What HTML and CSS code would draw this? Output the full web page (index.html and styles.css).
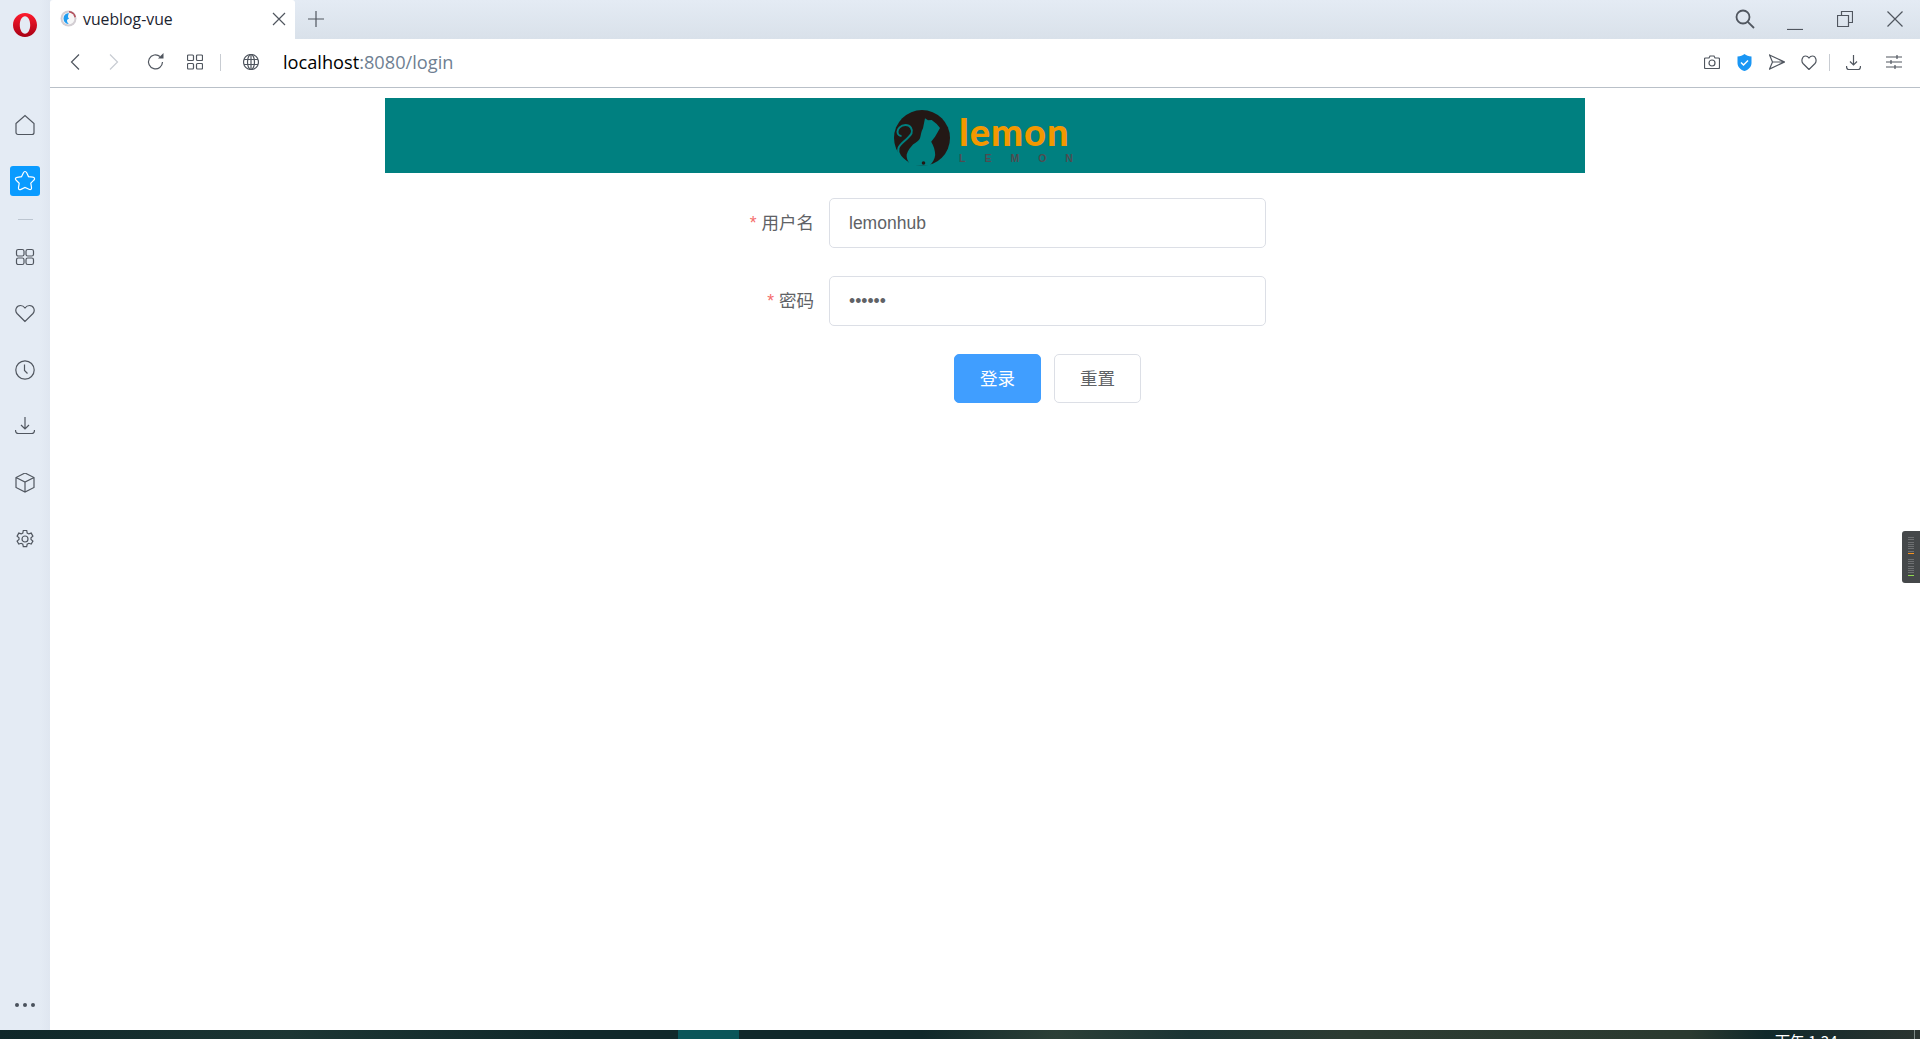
FILE: index.html
```html
<!DOCTYPE html>
<html lang="zh-CN">
<head>
    <meta charset="UTF-8">
    <meta name="viewport" content="width=device-width, initial-scale=1.0">
    <title>vueblog-vue</title>
    <link rel="stylesheet" href="styles.css">
</head>
<body>
    <div class="ventana">
        <aside class="lateral">
            <svg class="opera" width="28" height="28" viewBox="0 0 28 28">
                <defs>
                    <linearGradient id="rojo" x1="0" y1="0" x2="0" y2="1">
                        <stop offset="0" stop-color="#ff1b2d"/>
                        <stop offset="1" stop-color="#a70014"/>
                    </linearGradient>
                </defs>
                <path fill="url(#rojo)" fill-rule="evenodd" d="M14 2C7.400 2 2 7.400 2 14s5.400 12 12 12 12-5.400 12-12S20.600 2 14 2zM14 5.300c3 0 5.200 3.900 5.200 8.700s-2.200 8.700-5.200 8.700-5.200-3.900-5.200-8.700 2.200-8.700 5.200-8.700z"/>
            </svg>
            <a class="lat-btn">
                <svg width="24" height="24" viewBox="0 0 24 24" class="ico"><path d="M3 10.500 12 2.500l9 8v9a2 2 0 0 1-2 2H5a2 2 0 0 1-2-2z"/></svg>
            </a>
            <a class="lat-btn lat-activo">
                <svg width="24" height="24" viewBox="0 0 24 24" class="ico-blanco"><path d="M12 2.500c.8 0 1.300.5 1.700 1.300l1.800 3.800 4.300.6c2 .3 2.300 1.800 1 3l-3 3 .7 4.300c.3 1.800-1 2.600-2.500 1.800L12 18.400l-4 2c-1.500.8-2.800 0-2.500-1.800l.7-4.300-3-3c-1.300-1.200-1-2.700 1-3l4.300-.6 1.800-3.800c.4-.8.900-1.400 1.700-1.400z"/></svg>
            </a>
            <div class="lat-sep"></div>
            <a class="lat-btn">
                <svg width="20" height="20" viewBox="0 0 20 20" class="ico"><rect x="1.500" y="2.500" width="7.500" height="6.500" rx="1.800"/><rect x="11" y="2.500" width="7.500" height="6.500" rx="1.800"/><rect x="1.500" y="11" width="7.500" height="6.500" rx="1.800"/><rect x="11" y="11" width="7.500" height="6.500" rx="1.800"/></svg>
            </a>
            <a class="lat-btn">
                <svg width="20" height="20" viewBox="0 1 20 20" class="ico"><path d="M10 18.500 2 10.500C-.5 7.500 1.200 2.500 5.500 2.500c2 0 3.400 1 4.500 2.500 1.100-1.500 2.500-2.500 4.500-2.500 4.300 0 6 5 3.500 8z"/></svg>
            </a>
            <a class="lat-btn">
                <svg width="20" height="20" viewBox="0 0 20 20" class="ico"><circle cx="10" cy="10" r="9.200"/><path d="M9.500 4.500v6l3 3"/></svg>
            </a>
            <a class="lat-btn">
                <svg width="20" height="20" viewBox="0 1.500 20 20" class="ico"><path d="M10 1.500v12M6 9.500l4 4 4-4M.5 14.500c0 2 1 3.500 3 3.500h13c2 0 3-1.500 3-3.500"/></svg>
            </a>
            <a class="lat-btn">
                <svg width="20" height="20" viewBox="0 .5 20 20" class="ico"><path d="M10 .5l9 4.500v10l-9 4.500-9-4.500V5zM1 5l9 4.500L19 5M10 9.500v10"/></svg>
            </a>
            <a class="lat-btn">
                <svg width="20" height="20" viewBox="0 0 20 20" class="ico"><circle cx="10" cy="10" r="3"/><path d="M8.300 1.500h3.400l.5 2.500 1.600.9 2.400-.8 1.700 3-1.900 1.600v1.800l1.900 1.600-1.700 3-2.400-.8-1.600.9-.5 2.500H8.300l-.5-2.500-1.600-.9-2.400.8-1.700-3 1.900-1.600V8.700L2.100 7.100l1.700-3 2.400.8 1.600-.9z"/></svg>
            </a>
            <div class="lat-mas"><span></span><span></span><span></span></div>
        </aside>

        <div class="principal">
            <div class="pestanas">
                <div class="pestana">
                    <svg class="favicon" width="17" height="17" viewBox="0 0 17 17">
                        <circle cx="8.500" cy="8.500" r="8" fill="#d3ced3"/>
                        <path d="M9 1a8 8 0 0 1 7 6l-2 .5A6 6 0 0 0 9 3z" fill="#b4505c"/>
                        <circle cx="8.500" cy="8.500" r="6" fill="#f6f6f6"/>
                        <path d="M9 3a5.500 5.500 0 1 0 0 11c-1.500-1-2-2.300-2-3.500 0-1 1-1.500 2-1.500L8 7c0-1.500.5-3 1-4z" fill="#1f9cf0"/>
                    </svg>
                    <span class="pestana-titulo">vueblog-vue</span>
                    <svg class="cerrar" width="14" height="14" viewBox="0 0 14 14"><path d="M1 1l12 12M13 1 1 13"/></svg>
                </div>
                <svg class="nueva" width="16" height="16" viewBox="0 0 16 16"><path d="M8 0v16M0 8h16"/></svg>
                <div class="controles">
                    <svg class="ctl-buscar" width="20" height="20" viewBox="0 0 20 20"><circle cx="8" cy="8" r="6.500"/><path d="M12.800 12.800 19 19"/></svg>
                    <svg class="ctl-min" width="16" height="16" viewBox="0 0 16 16"><path d="M0 15.500h16"/></svg>
                    <svg class="ctl-max" width="16" height="16" viewBox="0 0 16 16"><path d="M.5 4.500h11v11H.5zM4.500 4.500V.5h11v11h-4"/></svg>
                    <svg class="ctl-x" width="16" height="16" viewBox="0 0 16 16"><path d="M.5.500l15 15M15.500.500l-15 15"/></svg>
                </div>
            </div>

            <div class="barra">
                <svg class="nav" width="10" height="16" viewBox="0 0 10 16"><path d="M9 .5 1.500 8 9 15.500"/></svg>
                <svg class="nav nav-off" width="10" height="16" viewBox="0 0 10 16"><path d="M1 .5 8.500 8 1 15.500"/></svg>
                <svg class="recargar" width="18" height="18" viewBox="0 0 18 18"><path d="M15.500 9A7 7 0 1 1 13 3.500"/><path class="relleno" d="M11 5.500h5.500V0z"/></svg>
                <svg class="rejilla" width="16" height="16" viewBox="0 0 16 16"><rect x=".5" y="1" width="6" height="5.500" rx="1"/><rect x="9.500" y="1" width="6" height="5.500" rx="1"/><rect x=".5" y="9.500" width="6" height="5.500" rx="1"/><rect x="9.500" y="9.500" width="6" height="5.500" rx="1"/></svg>
                <div class="sep"></div>
                <svg class="globo" width="16" height="16" viewBox="0 0 16 16"><circle cx="8" cy="8" r="7.500"/><ellipse cx="8" cy="8" rx="3.500" ry="7.500"/><path d="M8 .5v15M1 5.500h14M1 10.500h14"/></svg>
                <div class="url">localhost<span class="url-gris">:8080/login</span></div>
                <div class="barra-der">
                    <svg class="d-camara" width="16" height="14" viewBox="0 0 16 14"><path d="M1.500 3H5l1-2h4l1 2h3.500a1 1 0 0 1 1 1v8.500a1 1 0 0 1-1 1h-13a1 1 0 0 1-1-1V4a1 1 0 0 1 1-1z"/><circle cx="8" cy="8" r="3"/></svg>
                    <svg class="d-escudo" width="15" height="17" viewBox="0 0 15 17"><path class="s-azul" d="M7.500 0c2 1.500 4 2.300 7 2.500V9c0 3.700-2.500 6.500-7 8C3 15.500.5 12.700.5 9V2.500C3.500 2.300 5.500 1.500 7.500 0z"/><path class="s-check" d="M4 8.500 6.500 11 11 6.500"/></svg>
                    <svg class="d-enviar" width="16" height="16" viewBox="0 0 16 16"><path d="M.5 1 15.500 8 .5 15l3-7zM3.500 8h12"/></svg>
                    <svg class="d-corazon" width="16" height="15" viewBox="0 0 16 15"><path d="M8 14.500 2 8.500C0 6.300 1 1 4.500 1 6 1 7.200 1.800 8 3c.8-1.200 2-2 3.500-2C15 1 16 6.300 14 8.500z"/></svg>
                    <div class="sep-der"></div>
                    <svg class="d-bajar" width="15" height="15" viewBox="0 0 15 15"><path d="M7.500 0v10M4 6.500 7.500 10 11 6.500M.5 11c0 2 .5 3.500 2 3.500h10c1.500 0 2-1.500 2-3.500"/></svg>
                    <svg class="d-ajustes" width="16" height="14" viewBox="0 0 16 14"><path d="M0 2h16M0 7h16M0 12h16M11 0v4M5 5v4M9 10v4"/></svg>
                </div>
            </div>

            <main class="pagina">
                <header class="cabecera">
                    <div class="logo">
                        <svg width="58" height="58" viewBox="0 0 58 58">
                            <circle cx="29" cy="29" r="28" fill="#231815"/>
                            <path fill="#008080" d="M32 9.300l3 2 3.700-.3 5 4 3.300 4-2.500 4.500-2.500 4.200-3.800 5c2.500 4 4 9 4 13.300-.5 4-2.500 7.500-5.700 10.700H19l-2-1.500c-2.500-3-3.800-6.700-3.300-9.700 1-4 3.800-7.300 6.300-10 3-2.500 6-3.600 7-6.300 1-3 1-7 3-10z"/>
                            <path fill="none" stroke="#008080" stroke-width="2" d="M15 54C8 49 4 45 5.500 39c1.500-5 9-8 13-14.500 1.500-4-1-8.500-6-8.500-5 0-8 4-8 6.800 0 2.500 2 4.200 4 4.200"/>
                            <circle cx="30.500" cy="54" r="1.800" fill="#231815"/>
                        </svg>
                        <div class="marca">
                            <div class="marca-grande">lemon</div>
                            <div class="marca-chica">LEMON</div>
                        </div>
                    </div>
                </header>
                <form class="formulario">
                    <div class="fila">
                        <label class="etiqueta"><span class="req">*</span>用户名</label>
                        <input class="campo" type="text" value="lemonhub">
                    </div>
                    <div class="fila">
                        <label class="etiqueta"><span class="req">*</span>密码</label>
                        <input class="campo" type="password" value="123456">
                    </div>
                    <div class="botones">
                        <button class="boton boton-azul" type="button">登录</button>
                        <button class="boton" type="button">重置</button>
                    </div>
                </form>
                <div class="medidor">
                    <div class="medidor-grupo"><i></i><i></i><i></i><i></i><i></i><i></i><i></i><i class="m-naranja"></i></div>
                    <div class="medidor-grupo"><i></i><i></i><i></i><i></i><i></i><i></i><i></i><i class="m-verde"></i></div>
                </div>
            </main>
        </div>
    </div>
    <div class="tareas">
        <div class="tarea-activa"></div>
        <div class="reloj">下午 1:34</div>
        <div class="escritorio"></div>
    </div>
</body>
</html>
```

FILE: styles.css
```css
* {
    box-sizing: border-box;
}

html, body {
    height: 100%;
    margin: 0;
    overflow: hidden;
}

body {
    font-family: 'Open Sans', 'Noto Sans CJK SC', sans-serif;
    background: #fff;
    display: flex;
    flex-direction: column;
}

svg {
    display: block;
    flex-shrink: 0;
}

.ventana {
    height: 1030px;
    display: flex;
}

/* barra lateral */
.lateral {
    width: 50px;
    background: linear-gradient(to right, #e4ebf4 80%, #dfe6f0);
    display: flex;
    flex-direction: column;
    align-items: center;
    position: relative;
}

.opera {
    margin-top: 11px;
    margin-bottom: 71px;
}

.ico, .ico-blanco, .barra svg, .pestanas svg {
    fill: none;
    stroke: #50565f;
    stroke-width: 1.2;
}

.ico-blanco {
    stroke: #fff;
}

.lat-btn {
    width: 30px;
    height: 30px;
    margin-bottom: 26.4px;
    display: flex;
    align-items: center;
    justify-content: center;
    border-radius: 3px;
}

.lat-activo {
    background: #0a9bff;
    margin-bottom: 0;
}

.lat-sep {
    width: 15px;
    height: 1px;
    background: #bcc5d0;
    margin: 23px 0 22px;
}

.lat-mas {
    position: absolute;
    bottom: 23px;
    display: flex;
    gap: 4px;
}

.lat-mas span {
    width: 4px;
    height: 4px;
    border-radius: 50%;
    background: #4a525c;
}

/* pestañas */
.principal {
    flex: 1;
    display: flex;
    flex-direction: column;
    min-width: 0;
}

.pestanas {
    height: 39px;
    background: linear-gradient(to bottom, #e4ebf4, #d9e1ea);
    display: flex;
    align-items: center;
    padding-bottom: 2px;
}

.pestana {
    width: 245px;
    height: 39px;
    margin-bottom: -2px;
    background: #fff;
    border-radius: 3px 3px 0 0;
    display: flex;
    align-items: center;
    padding: 0 9px 2px 10px;
}

.pestanas .favicon {
    stroke: none;
    margin-right: 6px;
}

.pestanas .favicon path, .pestanas .favicon circle {
    stroke: none;
}

.pestana-titulo {
    flex: 1;
    font-size: 15.8px;
    color: #1c2430;
}

.nueva {
    margin-left: 13px;
}

.controles {
    margin-left: auto;
    display: flex;
    align-items: center;
    padding-right: 17px;
}

.pestanas .ctl-buscar {
    stroke-width: 1.8;
    margin-right: 32px;
}

.ctl-min {
    margin: 6px 34px 0 0;
}

.ctl-max {
    margin-right: 34px;
}

/* barra de direcciones */
.barra {
    height: 49px;
    border-bottom: 1px solid #b9c0c8;
    background: #fff;
    display: flex;
    align-items: center;
    padding: 0 0 2px 20px;
}

.nav {
    margin-right: 29px;
}

.barra .nav-off {
    stroke: #c8ccd2;
    margin-right: 27.5px;
}

.recargar {
    margin-right: 22px;
}

.barra .relleno {
    fill: #50565f;
    stroke: none;
}

.sep {
    width: 1px;
    height: 17px;
    background: #c8ccd2;
    margin: 0 22.5px 0 17px;
}

.url {
    font-size: 18.2px;
    color: #000;
    margin-left: 24px;
}

.url-gris {
    color: #6f7f92;
}

.barra-der {
    margin-left: auto;
    display: flex;
    align-items: center;
    padding-right: 18px;
}

.d-camara, .d-escudo {
    margin-right: 17px;
}

.d-enviar {
    margin-right: 16px;
}

.d-corazon {
    margin-right: 12px;
}

.d-bajar {
    margin-right: 25px;
}

.sep-der {
    width: 1px;
    height: 17px;
    background: #c8ccd2;
    margin-right: 16px;
}

.barra .s-azul {
    fill: #1a96f4;
    stroke: none;
}

.barra .s-check {
    stroke: #fff;
    stroke-width: 1.5;
}

/* pagina */
.pagina {
    flex: 1;
    position: relative;
    padding-top: 10px;
    color: #606266;
}

.cabecera {
    width: 1200px;
    height: 75px;
    margin-left: 335px;
    padding: 4px 0 0 508px;
    background: #008080;
    display: flex;
    align-items: center;
}

.logo {
    display: flex;
    align-items: center;
    gap: 8px;
}

.marca {
    display: flex;
    flex-direction: column;
    width: 112px;
}

.marca-grande {
    font-family: 'Lato', sans-serif;
    font-weight: 900;
    font-size: 38px;
    line-height: 36px;
    color: #f39800;
    letter-spacing: 1px;
    padding-top: 1px;
}

.marca-chica {
    font-family: 'Liberation Sans', sans-serif;
    font-weight: bold;
    font-size: 10.5px;
    line-height: 12px;
    color: #4e4c50;
    margin-top: 3px;
    letter-spacing: 19px;
    white-space: nowrap;
}

.formulario {
    width: 562px;
    margin-left: 654px;
    padding-top: 25px;
}

.fila {
    display: flex;
    align-items: center;
    margin-bottom: 28px;
}

.etiqueta {
    width: 125px;
    padding: 0 15px 3px 0;
    text-align: right;
    font-size: 17.5px;
}

.req {
    font-family: 'Liberation Sans', sans-serif;
    color: #f56c6c;
    margin-right: 5px;
}

.campo {
    width: 437px;
    height: 50px;
    border: 1px solid #dcdfe6;
    border-radius: 5px;
    padding: 0 19px;
    font-family: 'Liberation Sans', sans-serif;
    font-size: 17.5px;
    color: #606266;
    outline: none;
}

.botones {
    display: flex;
    gap: 13px;
    justify-content: center;
    margin-left: 125px;
    width: 437px;
}

.boton {
    width: 87px;
    height: 49px;
    padding: 0 0 2px;
    border: 1px solid #dcdfe6;
    border-radius: 5px;
    background: #fff;
    font-family: 'Noto Sans CJK SC', sans-serif;
    font-size: 17.5px;
    color: #606266;
}

.boton-azul {
    background: #409eff;
    border-color: #409eff;
    color: #fff;
}

/* medidor a la derecha */
.medidor {
    position: absolute;
    right: 0;
    top: 443px;
    width: 18px;
    height: 52px;
    background: #45484a;
    border-radius: 3px 0 0 3px;
    padding: 6px 0 0 6px;
    display: flex;
    flex-direction: column;
    gap: 4.6px;
}

.medidor-grupo {
    display: flex;
    flex-direction: column;
    gap: 1.3px;
}

.medidor-grupo i {
    display: block;
    width: 6px;
    height: 1px;
    background: #6e7072;
}

.medidor-grupo .m-naranja {
    background: #f7931e;
}

.medidor-grupo .m-verde {
    background: #8fd94f;
}

/* barra de tareas */
.tareas {
    height: 9px;
    position: relative;
    overflow: hidden;
    display: flex;
    background: linear-gradient(to right, #0f2729 0%, #1c3533 15%, #10282a 30%, #10282a 48%, #2c3f37 55%, #1b3434 62%, #2c3b32 70%, #2b3a30 88%, #10282a 92%, #2b3430 100%);
}

.tarea-activa {
    width: 61px;
    height: 9px;
    margin-left: 678px;
    background: #0a5559;
}

.reloj {
    position: absolute;
    left: 1775px;
    top: 1px;
    font-family: 'Noto Sans CJK SC', sans-serif;
    font-size: 15px;
    line-height: 20px;
    color: #fff;
}

.escritorio {
    position: absolute;
    left: 1914px;
    top: 0;
    width: 1px;
    height: 9px;
    background: #7d8a86;
}
```
